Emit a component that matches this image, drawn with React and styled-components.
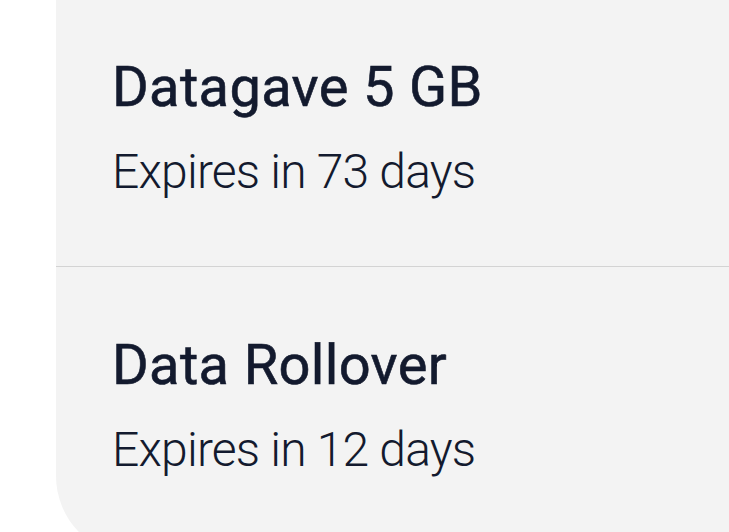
import React from "react";
import styled, { createGlobalStyle } from "styled-components";

const Global = createGlobalStyle`
  html, body { margin: 0; padding: 0; background: #ffffff; }
  body { overflow: hidden; font-family: Roboto, "Noto Sans", sans-serif; }
`;

const Page = styled.div`
  height: 532px;
  overflow: hidden;
  padding-left: 56px;
  background: #ffffff;
`;

const Panel = styled.div`
  background: #f3f3f3;
  border-bottom-left-radius: 80px;
  min-height: 556px;
`;

const Row = styled.div`
  display: flex;
  flex-direction: column;
  gap: 22px;
  padding: 65px 24px 65px 56px;
  border-bottom: 1px solid #d3d3d3;
  &:first-child { padding-top: 54px; }
  &:last-child { border-bottom: none; }
`;

const Title = styled.div`
  font-family: Roboto, "Noto Sans", sans-serif;
  font-weight: 400;
  font-size: 56px;
  line-height: 67px;
  color: #131a2e;
  letter-spacing: 0.35px;
  -webkit-text-stroke: 0.6px #131a2e;
`;

const Sub = styled.div`
  font-family: Roboto, "Noto Sans", sans-serif;
  font-weight: 300;
  font-size: 48px;
  line-height: 58px;
  color: #131a2e;
  letter-spacing: -0.8px;
`;

const items = [
  { title: "Datagave 5 GB", sub: "Expires in 73 days" },
  { title: "Data Rollover", sub: "Expires in 12 days" },
];

export default function App() {
  return (
    <>
      <Global />
      <Page>
        <Panel>
          {items.map((it) => (
            <Row key={it.title}>
              <Title>{it.title}</Title>
              <Sub>{it.sub}</Sub>
            </Row>
          ))}
        </Panel>
      </Page>
    </>
  );
}
